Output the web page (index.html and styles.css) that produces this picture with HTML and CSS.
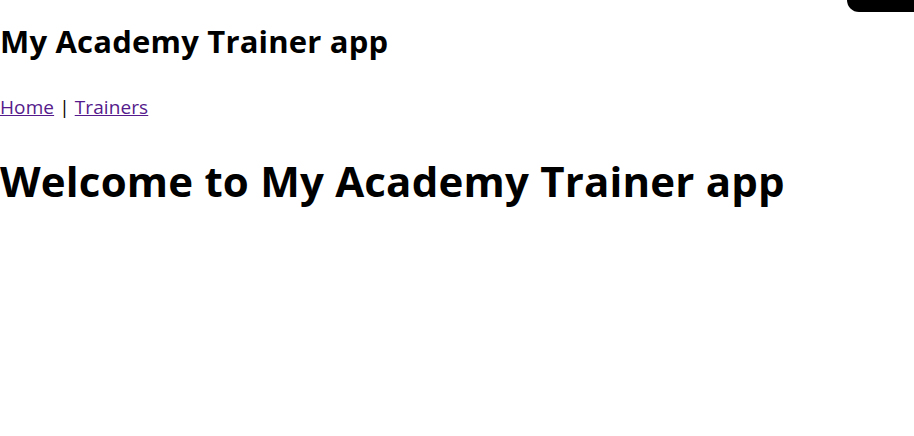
FILE: index.html
```html
<!DOCTYPE html>
<html lang="en">
<head>
<meta charset="utf-8">
<title>My Academy Trainer app</title>
<link rel="stylesheet" href="styles.css">
</head>
<body>
<div class="corner"></div>
<header class="site-header">
  <h2 class="app-title">My Academy Trainer app</h2>
  <nav class="nav"><a href="#" class="nav-link">Home</a> | <a href="#" class="nav-link">Trainers</a></nav>
</header>
<main>
  <h1 class="welcome">Welcome to My Academy Trainer app</h1>
</main>
</body>
</html>
```
FILE: styles.css
```css
html, body {
  margin: 0;
  padding: 0;
  background: #ffffff;
}
body {
  font-family: "Open Sans", "Noto Sans", sans-serif;
  color: #000000;
}
.corner {
  position: absolute;
  top: 0;
  right: 0;
  width: 67px;
  height: 12px;
  background: #000000;
  border-bottom-left-radius: 12px;
}
.app-title {
  margin: 0;
  padding-top: 23px;
  font-size: 31px;
  line-height: 36px;
  font-weight: 700;
  letter-spacing: 0.2px;
}
.nav {
  margin-top: 35px;
  font-size: 19px;
  line-height: 26px;
  letter-spacing: 0.1px;
}
.nav-link {
  color: #551a8b;
  text-decoration: underline;
}
.welcome {
  margin: 35px 0 0;
  font-size: 42px;
  line-height: 52px;
  font-weight: 700;
  letter-spacing: 0.2px;
}
```
